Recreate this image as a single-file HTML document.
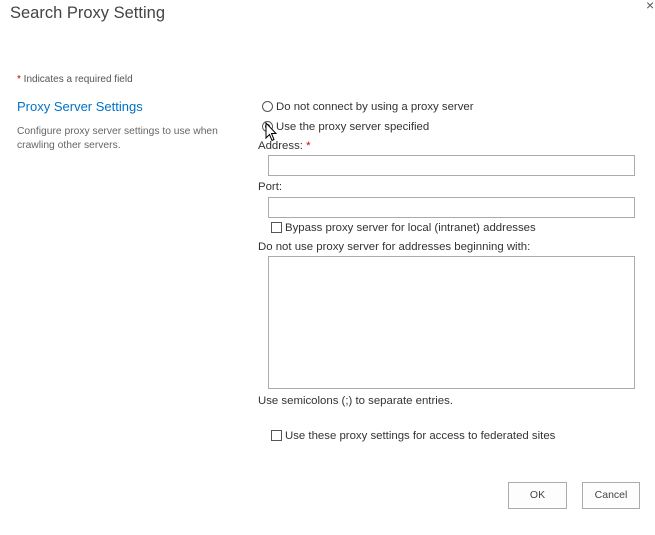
<!DOCTYPE html>
<html><head><style>
body{margin:0;width:655px;height:535px;background:#fff;font-family:"Liberation Sans",sans-serif;color:#444;position:relative;overflow:hidden}
.a{position:absolute;white-space:nowrap}
.t{font-size:11.4px;color:#333}
.box{position:absolute;border:1px solid #ababab;background:#fff;box-sizing:border-box}
.rad{position:absolute;width:11px;height:11px;border:1px solid #555;border-radius:50%;box-sizing:border-box}
.cb{position:absolute;width:11px;height:11px;border:1px solid #555;box-sizing:border-box}
.btn{position:absolute;border:1px solid #ababab;box-sizing:border-box;font-size:10.5px;color:#444;text-align:center;line-height:25px;background:#fdfdfd}
</style></head><body>
<div class="a" style="left:10px;top:4px;font-size:16.5px;color:#444">Search Proxy Setting</div>
<div class="a" style="left:646px;top:-3px;font-size:14px;color:#555">×</div>
<div class="a" style="left:17px;top:74px;font-size:10px;color:#555"><span style="color:#c00">*</span> Indicates a required field</div>
<div class="a" style="left:17px;top:99px;font-size:13px;color:#0072c6">Proxy Server Settings</div>
<div class="a" style="left:17px;top:125px;font-size:10.3px;color:#666;line-height:14px">Configure proxy server settings to use when<br>crawling other servers.</div>
<div class="rad" style="left:262px;top:101px"></div>
<div class="a t" style="left:276px;top:101px">Do not connect by using a proxy server</div>
<div class="rad" style="left:262px;top:121px"><div style="position:absolute;left:2px;top:2px;width:5px;height:5px;border-radius:50%;background:#222"></div></div>
<svg class="a" style="left:265px;top:122px" width="14" height="22" viewBox="0 0 14 22"><path d="M1 1 L1 16 L4.5 12.5 L7 18.5 L9 17.5 L6.5 11.5 L11 11.5 Z" fill="#fff" stroke="#000" stroke-width="1"/></svg>
<div class="a t" style="left:276px;top:121px">Use the proxy server specified</div>
<div class="a t" style="left:258px;top:140px">Address: <span style="color:#c00">*</span></div>
<div class="box" style="left:268px;top:155px;width:367px;height:21px"></div>
<div class="a t" style="left:258px;top:181px">Port:</div>
<div class="box" style="left:268px;top:197px;width:367px;height:21px"></div>
<div class="cb" style="left:271px;top:222px"></div>
<div class="a t" style="left:285px;top:222px">Bypass proxy server for local (intranet) addresses</div>
<div class="a t" style="left:258px;top:241px">Do not use proxy server for addresses beginning with:</div>
<div class="box" style="left:268px;top:256px;width:367px;height:133px"></div>
<div class="a t" style="left:258px;top:395px">Use semicolons (;) to separate entries.</div>
<div class="cb" style="left:271px;top:430px"></div>
<div class="a t" style="left:285px;top:430px">Use these proxy settings for access to federated sites</div>
<div class="btn" style="left:508px;top:482px;width:59px;height:27px">OK</div>
<div class="btn" style="left:582px;top:482px;width:58px;height:27px">Cancel</div>
</body></html>
